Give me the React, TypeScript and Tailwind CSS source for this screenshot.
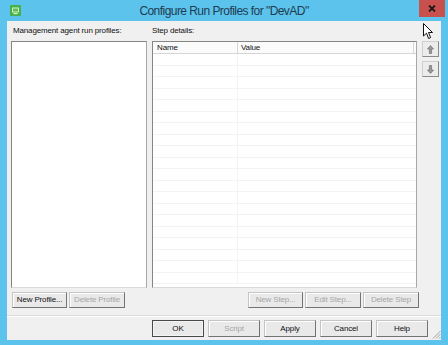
import React from "react";

const ui = { fontFamily: "'Liberation Sans', Arial, sans-serif" };

function Btn({ label, disabled, primary }: { label: string; disabled?: boolean; primary?: boolean }) {
  return (
    <div
      className={`flex items-center justify-center h-full w-full bg-[#e9e9e9] border ${
        primary
          ? "border-[#4a4a4a] shadow-[inset_0_0_0_1px_#f4f4f4]"
          : "border-t-[#c4c4c4] border-l-[#c4c4c4] border-r-[#737373] border-b-[#737373] shadow-[inset_1px_1px_0_#ffffff]"
      } text-[8px] tracking-[-0.15px] ${disabled ? "text-[#a6a6a6]" : "text-[#111]"}`}
      style={ui}
    >
      {label}
    </div>
  );
}

function ArrowIcon({ down }: { down?: boolean }) {
  return (
    <svg width="7" height="9" viewBox="0 0 7 9" className={down ? "rotate-180" : ""}>
      <path d="M3.5 0.5 L6.5 4 L4.6 4 L4.6 8.5 L2.4 8.5 L2.4 4 L0.5 4 Z" fill="#9a9a9a" stroke="#707070" strokeWidth="0.7" strokeLinejoin="round" />
    </svg>
  );
}

export default function App() {
  const rows = Array.from({ length: 20 });

  return (
    <div className="relative w-[448px] h-[345px] bg-[#5cc3ec] flex flex-col overflow-hidden">
      {/* Title bar */}
      <div className="grid grid-cols-[1fr_auto_1fr] h-[21px] shrink-0">
        <div className="flex items-start pl-[10px] pt-[5px]">
          <svg width="11" height="11" viewBox="0 0 11 11">
            <rect x="0" y="0" width="11" height="11" rx="1" fill="#46b14a" />
            <rect x="2" y="2.5" width="7" height="5" fill="#d7f0c9" />
            <rect x="3" y="3.5" width="5" height="3" fill="#5dbf4f" />
            <rect x="3.5" y="8" width="4" height="1.2" fill="#d7f0c9" />
          </svg>
        </div>
        <div
          className="flex items-center justify-center text-[12px] tracking-[-0.55px] text-[#1d3c52] pt-[1px]"
          style={ui}
        >
          Configure Run Profiles for "DevAD"
        </div>
        <div className="flex justify-end items-start pr-[3px]">
          <div className="w-[26px] h-[17px] bg-[#c9514d] flex items-center justify-center">
            <svg width="8" height="7" viewBox="0 0 8 7">
              <path d="M1 0.5 L7 6.5 M7 0.5 L1 6.5" stroke="#1a1a1a" strokeWidth="1.8" />
            </svg>
          </div>
        </div>
      </div>

      {/* Client area */}
      <div className="flex-1 mx-[7px] mb-[5px] bg-[#f0f0f0] flex flex-col text-[#111]" style={ui}>
        {/* Labels */}
        <div className="flex mt-[5px] h-[10px] text-[8px] tracking-[-0.15px] leading-[10px]">
          <div className="pl-[6px] w-[145px]">Management agent run profiles:</div>
          <div>Step details:</div>
        </div>

        {/* Lists */}
        <div className="flex mt-[5px] h-[247px] pl-[4px] gap-[5px]">
          <div className="w-[136px] bg-white border border-t-[#858585] border-l-[#858585] border-r-[#a8a8a8] border-b-[#dadada]" />
          <div className="w-[265px] bg-white border border-t-[#858585] border-l-[#858585] border-r-[#a8a8a8] border-b-[#dadada] flex flex-col overflow-hidden">
            <div className="flex h-[12px] shrink-0 bg-[#fbfbfb] border-b border-[#d6d6d6] text-[8px] tracking-[-0.15px] leading-[11px]">
              <div className="w-[85px] pl-[4px] border-r border-[#d6d6d6]">Name</div>
              <div className="flex-1 pl-[3px] border-r border-[#d6d6d6] mr-[2px]">Value</div>
            </div>
            {rows.map((_, i) => (
              <div key={i} className="flex h-[11.5px] shrink-0 border-b border-[#f3f3f3]">
                <div className="w-[85px] border-r border-[#f4f4f4]" />
                <div className="flex-1" />
              </div>
            ))}
          </div>
          <div className="flex flex-col gap-[4px]">
            <div className="w-[17px] h-[16px] bg-[#ececec] border border-t-[#cfcfcf] border-l-[#cfcfcf] border-r-[#8a8a8a] border-b-[#8a8a8a] flex items-center justify-center">
              <ArrowIcon />
            </div>
            <div className="w-[17px] h-[16px] bg-[#ececec] border border-t-[#cfcfcf] border-l-[#cfcfcf] border-r-[#8a8a8a] border-b-[#8a8a8a] flex items-center justify-center">
              <ArrowIcon down />
            </div>
          </div>
        </div>

        {/* Profile / step buttons */}
        <div className="flex mt-[4px] h-[16px] pl-[5px] pr-[22px]">
          <div className="flex gap-[2px]">
            <div className="w-[55px] h-full"><Btn label="New Profile..." /></div>
            <div className="w-[56px] h-full"><Btn label="Delete Profile" disabled /></div>
          </div>
          <div className="flex gap-[2px] ml-auto">
            <div className="w-[55px] h-full"><Btn label="New Step..." disabled /></div>
            <div className="w-[56px] h-full"><Btn label="Edit Step..." disabled /></div>
            <div className="w-[56px] h-full"><Btn label="Delete Step" disabled /></div>
          </div>
        </div>

        {/* Separator */}
        <div className="mt-[7px] h-[1px] bg-[#dcdcdc]" />
        <div className="h-[1px] bg-white" />

        {/* Dialog buttons */}
        <div className="flex justify-end gap-[4px] mt-[3px] h-[17px] pr-[13px]">
          <div className="w-[52px] h-full"><Btn label="OK" primary /></div>
          <div className="w-[52px] h-full"><Btn label="Script" disabled /></div>
          <div className="w-[52px] h-full"><Btn label="Apply" /></div>
          <div className="w-[52px] h-full"><Btn label="Cancel" /></div>
          <div className="w-[52px] h-full"><Btn label="Help" /></div>
        </div>
      </div>

      {/* Size grip */}
      <svg className="absolute left-[432px] top-[330px]" width="9" height="9" viewBox="0 0 9 9">
        <path d="M8.5 1 L1 8.5 M8.5 4 L4 8.5 M8.5 7 L7 8.5" stroke="#9a9a9a" strokeWidth="0.9" />
      </svg>

      {/* Mouse cursor */}
      <svg className="absolute left-[423px] top-[23px]" width="11" height="17" viewBox="0 0 11 17">
        <path d="M0.5 0.5 L0.5 13 L3.5 10.2 L5.6 15.5 L7.6 14.6 L5.5 9.5 L9.5 9.5 Z" fill="#ffffff" stroke="#111" strokeWidth="1" strokeLinejoin="round" />
      </svg>
    </div>
  );
}
